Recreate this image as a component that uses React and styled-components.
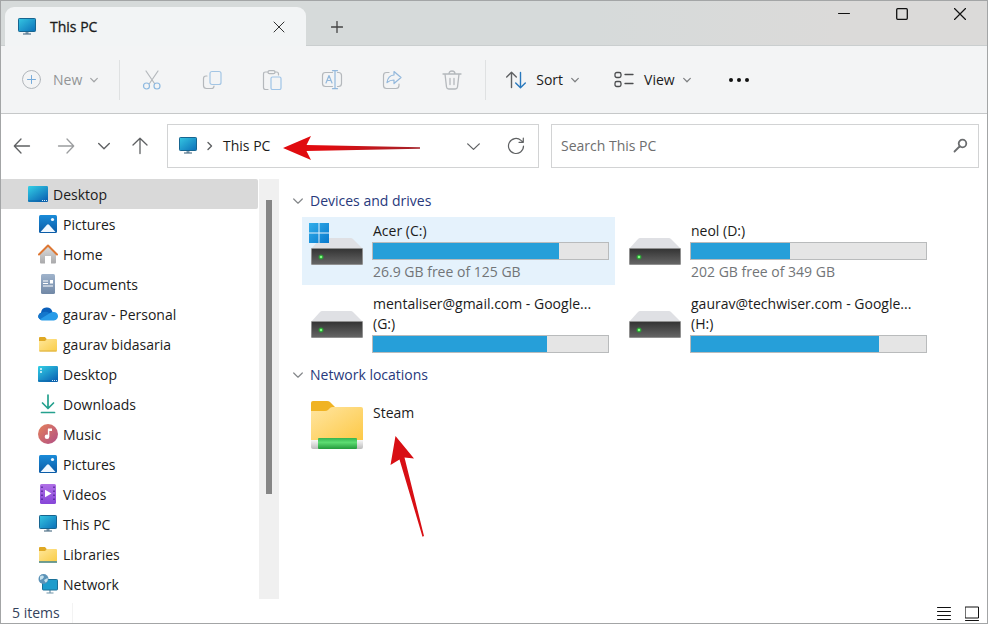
import React from 'react';
import styled, { createGlobalStyle } from 'styled-components';

const GlobalStyle = createGlobalStyle`
  * {
    box-sizing: border-box;
  }
  body {
    margin: 0;
    background: #fff;
    color: #1b1b1b;
    font-family: "Open Sans", "Noto Sans", sans-serif;
    font-size: 14px;
    line-height: 20px;
  }
  button, input {
    font: inherit;
    color: inherit;
    padding: 0;
    border: 0;
    background: none;
  }
  svg {
    display: block;
    flex: none;
  }
`;

const Window = styled.div`
  display: flex;
  flex-direction: column;
  min-height: 100vh;
  border: 1px solid #a3a5a6;
  background: #fff;
`;

const TitleBar = styled.header`
  display: flex;
  height: 45px;
  padding-left: 4px;
  background: linear-gradient(90deg, #d6dada 60%, #dbdad9 85%);
  border-bottom: 1px solid #cacecf;
`;

const Tab = styled.div`
  display: flex;
  align-items: center;
  width: 301px;
  height: 39px;
  margin-top: 6px;
  padding: 0 18px 0 12px;
  gap: 13px;
  border-radius: 9px 9px 0 0;
  background: #f2f4f5;
`;

const TabTitle = styled.span`
  flex: 1;
  -webkit-text-stroke: 0.3px #1b1b1b;
`;

const IconButton = styled.button`
  display: flex;
  align-items: center;
  justify-content: center;
  width: ${({ $width }) => $width || 18}px;
  height: ${({ $height }) => $height || 18}px;
`;

const WindowControls = styled.div`
  display: flex;
  gap: 40px;
  margin-left: auto;
  padding: 4px 18px 0 0;
`;

const Toolbar = styled.div`
  display: flex;
  align-items: center;
  height: 68px;
  padding-left: 20px;
  background: #f3f4f5;
  border-bottom: 1px solid #c6c8c9;
`;

const ToolButton = styled.button`
  display: flex;
  align-items: center;
  gap: 10px;
  height: 40px;
  margin-right: ${({ $after }) => $after}px;
  color: ${({ disabled }) => (disabled ? '#929496' : '#1b1b1b')};

  svg:last-child {
    margin-left: -2px;
  }
`;

const FileTools = styled.div`
  display: flex;
  padding: 0 3px 0 2px;
  border: solid #dfe1e2;
  border-width: 0 1px;
  margin-right: 20px;
`;

const NavRow = styled.div`
  display: flex;
  align-items: center;
  padding: 10px 8px 11px 0;
`;

const NavButtons = styled.div`
  display: flex;
  margin-right: 6px;
`;

const AddressBar = styled.div`
  flex: 93 1 372px;
  display: flex;
  align-items: center;
  height: 44px;
  min-width: 0;
  padding: 0 13px 0 10px;
  border: 1px solid #d2d3d4;
`;

const Crumb = styled.a`
  margin: 0 13px 0 1px;
  color: inherit;
  text-decoration: none;
  white-space: nowrap;
`;

const AddressActions = styled.div`
  display: flex;
  gap: 25px;
  margin-left: auto;
`;

const SearchBox = styled.form`
  flex: 107 1 428px;
  display: flex;
  align-items: center;
  height: 44px;
  min-width: 0;
  margin-left: 12px;
  padding: 0 9px;
  border: 1px solid #d2d3d4;

  input {
    flex: 1;
    min-width: 0;
    outline: none;
  }
  input::placeholder {
    color: #6e6e6e;
    opacity: 1;
  }
`;

const Body = styled.div`
  display: flex;
  flex: 1;
`;

const Sidebar = styled.nav`
  flex: none;
  width: 257px;
`;

const TreeList = styled.ul`
  margin: 0;
  padding: 0;
  list-style: none;
`;

const TreeLink = styled.a`
  display: flex;
  align-items: center;
  gap: 5px;
  height: 30px;
  padding-left: ${({ $root }) => ($root ? 27 : 37)}px;
  border-radius: 0 2px 2px 0;
  background: ${({ $root }) => ($root ? '#d9d9d9' : 'transparent')};
  color: #1b1b1b;
  text-decoration: none;
`;

const TreeLabel = styled.span`
  padding-top: 2px;
`;

const ScrollTrack = styled.div`
  flex: none;
  width: 20px;
  margin-left: 1px;
  padding: 21px 7px 0;
  background: #f0f0f0;
`;

const ScrollThumb = styled.div`
  height: 294px;
  background: #868686;
`;

const Content = styled.main`
  flex: 1;
  padding: 12px 12px 0 14px;
`;

const Group = styled.section`
  margin-bottom: 7px;
`;

const GroupTitle = styled.h2`
  display: flex;
  align-items: center;
  gap: 7px;
  margin: 0 0 6px;
  font-size: 14px;
  font-weight: 400;
  color: #28397c;
`;

const Tiles = styled.div`
  display: grid;
  grid-template-columns: repeat(auto-fill, 313px);
  gap: 5px;
  padding-left: 9px;
`;

const Tile = styled.article`
  position: relative;
  display: flex;
  align-items: center;
  gap: 7px;
  height: 68px;
  padding: 0 6px 0 5px;
  background: ${({ $active }) => ($active ? '#e5f2fc' : 'transparent')};
`;

const TileText = styled.div`
  align-self: flex-start;
  flex: 1;
  min-width: 0;
  padding-top: ${({ $top }) => $top || 4}px;
`;

const TileLine = styled.div`
  padding-left: 1px;
  white-space: nowrap;
  color: ${({ $muted }) => ($muted ? '#727578' : '#1b1b1b')};
`;

const Meter = styled.div`
  height: 18px;
  margin: 1px 0 2px;
  border: 1px solid #b9bbbc;
  background: #e5e5e5;
`;

const MeterFill = styled.div`
  height: 100%;
  background: #269fd9;
`;

const PointerArrow = styled.svg`
  position: absolute;
  left: 86px;
  top: 44px;
`;

const StatusBar = styled.footer`
  display: flex;
  align-items: center;
  gap: 14px;
  height: 24px;
  padding: 4px 8px 0 11px;
  color: #34425c;
`;

const ItemCount = styled.span`
  padding-right: 12px;
  border-right: 1px solid #f3f3f3;
  margin-right: auto;
`;

const Line = ({ w = 20, h = 20, color = '#5f6163', width = 1, children }) => (
  <svg width={w} height={h} viewBox={`0 0 ${w} ${h}`} fill="none" stroke={color} strokeWidth={width}
    strokeLinecap="round" strokeLinejoin="round" aria-hidden="true">
    {children}
  </svg>
);

const Chevron = ({ size = 8, color, width = 1.2 }) => (
  <Line w={size} h={size} color={color} width={width}>
    <path d={`M.7 ${size * 0.3}L${size / 2} ${size * 0.72}L${size - 0.7} ${size * 0.3}`} />
  </Line>
);

const MonitorIcon = () => (
  <svg width="20" height="20" viewBox="0 0 20 20" aria-hidden="true">
    <defs>
      <linearGradient id="monitor" x1="0" y1="0" x2="1" y2="1">
        <stop offset="0" stopColor="#35c6e2" />
        <stop offset="1" stopColor="#0b6fb8" />
      </linearGradient>
    </defs>
    <path d="M8.5 14h3v3h-3z" fill="#7d99ad" />
    <rect x="1.5" y="1.5" width="17" height="13" rx=".8" fill="url(#monitor)" stroke="#176590" />
    <path d="M6 17h8" stroke="#56758b" strokeWidth="1.2" />
  </svg>
);

const DesktopIcon = ({ dots }) => (
  <svg width="20" height="20" viewBox="0 0 20 20" aria-hidden="true">
    <defs>
      <linearGradient id="desktop" x1="0" y1="0" x2=".8" y2="1">
        <stop offset="0" stopColor="#33d0e6" />
        <stop offset="1" stopColor="#0a63b4" />
      </linearGradient>
    </defs>
    <rect y="2" width="20" height="16" rx="1.2" fill="url(#desktop)" />
    <path d="M0 16h20v.8a1.2 1.2 0 0 1-1.2 1.2H1.2A1.2 1.2 0 0 1 0 16.8z" fill="#0b5c9f" opacity=".4" />
    <path d="M14 16.5h1m1 0h1m1 0h1" stroke="#d8efff" />
    {dots && <path d="M2 5h2M2 8h2" stroke="#e9fbff" strokeWidth="1.6" />}
  </svg>
);

const PicturesIcon = () => (
  <svg width="20" height="20" viewBox="0 0 20 20" aria-hidden="true">
    <defs>
      <linearGradient id="pictures" x1="0" y1="0" x2="0" y2="1">
        <stop offset="0" stopColor="#1a8bd8" />
        <stop offset="1" stopColor="#0b5ba6" />
      </linearGradient>
    </defs>
    <rect x="1" y="1" width="18" height="18" rx="1.5" fill="url(#pictures)" />
    <path d="M2.5 18L9 10.8q1-1 2 0L17.5 18z" fill="#f1f8ff" />
    <circle cx="14.5" cy="5.5" r="1.6" fill="#f1f8ff" />
  </svg>
);

const HomeIcon = () => (
  <svg width="20" height="20" viewBox="0 0 20 20" aria-hidden="true">
    <defs>
      <linearGradient id="homeWall" x1="0" y1="0" x2="0" y2="1">
        <stop offset="0" stopColor="#dedede" />
        <stop offset="1" stopColor="#a9a9ab" />
      </linearGradient>
    </defs>
    <path d="M2 10l8-8 8 8v8.5q0 1-1 1h-4V12H7v7.5H3q-1 0-1-1z" fill="url(#homeWall)" />
    <path d="M1 10.5L10 1.5l9 9" fill="none" stroke="#dd7733" strokeWidth="2" strokeLinecap="round" strokeLinejoin="round" />
  </svg>
);

const DocumentsIcon = () => (
  <svg width="20" height="20" viewBox="0 0 20 20" aria-hidden="true">
    <defs>
      <linearGradient id="documents" x1="0" y1="0" x2="0" y2="1">
        <stop offset="0" stopColor="#9fb3cb" />
        <stop offset="1" stopColor="#7188a6" />
      </linearGradient>
    </defs>
    <rect x="3" y="0" width="14" height="20" rx="1.5" fill="url(#documents)" />
    <path d="M5 7h5M5 9.5h5M5 12h10" stroke="#fff" strokeWidth="1.2" />
    <rect x="12" y="6" width="3" height="3.5" fill="#fff" />
  </svg>
);

const CloudIcon = () => (
  <svg width="20" height="20" viewBox="0 0 20 20" aria-hidden="true">
    <path d="M3.5 16A3.7 3.7 0 0 1 3 8.8 5.8 5.8 0 0 1 14.3 7.5L15 10z" fill="#0b60ba" />
    <path d="M6 8q3-1 5 1l6 4-1 3H4q-3-.5-4-3 .5-4 6-5z" fill="#1477cc" />
    <path d="M2 15.2L12.5 8.8a5 5 0 0 1 3-.8A4.1 4.1 0 0 1 16 16.5H4q-1.2 0-2-1.3z" fill="#289be8" />
  </svg>
);

const FolderIcon = ({ library }) => (
  <svg width="20" height="20" viewBox="0 0 20 20" aria-hidden="true">
    <defs>
      <linearGradient id="folder" x1="0" y1="0" x2="1" y2="1">
        <stop offset="0" stopColor="#ffe79a" />
        <stop offset="1" stopColor="#f9cc47" />
      </linearGradient>
    </defs>
    <path d="M1 4q0-1 1-1h5l2 2.5L7 8H1z" fill="#dfa824" />
    <path d="M1 7h6l2-2h9q1 0 1 1v10.500q0 1-1 1H2q-1 0-1-1z" fill="url(#folder)" />
    <path d={library ? 'M1 18h18' : 'M1.5 17h17'} stroke={library ? '#417f79' : '#dcb040'} strokeWidth={library ? 1.5 : 1} />
  </svg>
);

const DownloadsIcon = () => (
  <Line color="#25a18e" width={1.7}>
    <path d="M10 1v13M4.5 9l5.5 5.5L15.5 9" />
    <path d="M3.5 18.5h13" />
  </Line>
);

const MusicIcon = () => (
  <svg width="20" height="20" viewBox="0 0 20 20" aria-hidden="true">
    <defs>
      <linearGradient id="music" x1="0" y1="0" x2="1" y2="1">
        <stop offset="0" stopColor="#e5815a" />
        <stop offset="1" stopColor="#b04e86" />
      </linearGradient>
    </defs>
    <circle cx="10" cy="10" r="10" fill="url(#music)" />
    <path d="M10.6 5v7.5" stroke="#fff" strokeWidth="1.5" />
    <path d="M10 4.5h4V7h-4z" fill="#fff" />
    <circle cx="9" cy="12.8" r="2.3" fill="#fff" />
  </svg>
);

const VideosIcon = () => (
  <svg width="20" height="20" viewBox="0 0 20 20" aria-hidden="true">
    <defs>
      <linearGradient id="videos" x1="0" y1="0" x2="0" y2="1">
        <stop offset="0" stopColor="#b070e6" />
        <stop offset="1" stopColor="#8646d8" />
      </linearGradient>
    </defs>
    <rect x="2" y="0" width="16" height="20" rx="1.5" fill="url(#videos)" />
    <path d="M4 2.5v16M16 2.5v16" stroke="#4c2391" strokeWidth="1.4" strokeDasharray="1.6 2.4" />
    <path d="M7 5.8v7.4L13.5 9.5z" fill="#fff" />
  </svg>
);

const NetworkIcon = () => (
  <svg width="20" height="20" viewBox="0 0 20 20" aria-hidden="true">
    <path d="M12 16v2.5M8.5 19h7" stroke="#6f93a8" strokeWidth="1.2" />
    <rect x="4.5" y="5.5" width="15" height="10.5" rx=".8" fill="#1d9ccc" stroke="#1a7098" />
    <circle cx="5.5" cy="5" r="5" fill="#5c93b8" />
    <path d="M2 2.5q3-2 4 .5L4.5 5 2 6zM6 6l3.5-2q1 3-2 4.5z" fill="#c6e2ee" />
  </svg>
);

const DriveIcon = ({ system }) => (
  <svg width="58" height="58" viewBox="0 0 58 58" aria-hidden="true">
    <defs>
      <linearGradient id="driveFront" x1="0" y1="0" x2="0" y2="1">
        <stop offset="0" stopColor="#333" />
        <stop offset="1" stopColor="#666" />
      </linearGradient>
      <linearGradient id="winLogo" x1="0" y1="0" x2="1" y2="1">
        <stop offset="0" stopColor="#32aeea" />
        <stop offset="1" stopColor="#0879cd" />
      </linearGradient>
    </defs>
    <path d="M15 16h29q1 0 2 1l10 10H4L13 17q1-1 2-1z" fill="#dfe0e4" />
    <rect x="4.5" y="26.5" width="51" height="16" rx=".5" fill="url(#driveFront)" stroke="#909090" />
    <circle cx="14" cy="35" r="2.5" fill="#2d9a36" />
    <circle cx="14" cy="35" r="1.3" fill="#7dff7f" />
    {system && <path d="M2 1h9.5v9.5H2zM12.5 1H22v9.5h-9.5zM2 11.5h9.5V21H2zM12.5 11.5H22V21h-9.5z" fill="url(#winLogo)" />}
  </svg>
);

const NetworkFolderIcon = () => (
  <svg width="58" height="58" viewBox="0 0 58 58" aria-hidden="true">
    <defs>
      <linearGradient id="netFolder" x1="0" y1="0" x2="1" y2="1">
        <stop offset="0" stopColor="#ffe5a0" />
        <stop offset="1" stopColor="#fdc947" />
      </linearGradient>
      <linearGradient id="pipe" x1="0" y1="0" x2="0" y2="1">
        <stop offset="0" stopColor="#35b350" />
        <stop offset=".4" stopColor="#5ddc72" />
        <stop offset="1" stopColor="#249a3c" />
      </linearGradient>
      <linearGradient id="pipeEnd" x1="0" y1="0" x2="0" y2="1">
        <stop offset="0" stopColor="#f7f7f7" />
        <stop offset="1" stopColor="#bcbcbc" />
      </linearGradient>
    </defs>
    <path d="M4 7q0-2 2-2h14q2 0 3 1l5 5-9 8H4z" fill="#f0b323" />
    <path d="M4 15h14q2 0 3-1l2-2q1-1 3-1h28q2 0 2 2v31H4z" fill="url(#netFolder)" />
    <path d="M4 44h52v7q0 2-2 2H6q-2 0-2-2z" fill="url(#pipeEnd)" />
    <rect x="11" y="42" width="39" height="11" rx="1" fill="url(#pipe)" />
  </svg>
);

const NewIcon = () => (
  <Line w={22} color="#b1b6bb">
    <circle cx="10.5" cy="9.5" r="9" />
    <path d="M10.5 5.5v8M6.5 9.5h8" stroke="#78acdb" />
  </Line>
);

const CutIcon = () => (
  <Line color="#b4b8bc" width={1.2}>
    <path d="M4 1l8.5 12.5M16 1L7.5 13.5" />
    <circle cx="4.5" cy="16" r="3" stroke="#8db9e0" />
    <circle cx="15" cy="16" r="3" stroke="#8db9e0" />
  </Line>
);

const CopyIcon = () => (
  <Line color="#b4b8bc" width={1.2}>
    <path d="M5 6H4Q1.5 6 1.5 8.500v7Q1.5 18.5 4.5 18.5h5Q12 18.5 12 16" />
    <rect x="8" y="1.5" width="11" height="13" rx="2" stroke="#a3c5e4" />
  </Line>
);

const PasteIcon = () => (
  <Line color="#b4b8bc" width={1.2}>
    <path d="M6 19.5H3.5q-2 0-2-2V4q0-2 2-2H6M13 2h1.5q2 0 2 2v1" />
    <rect x="6" y=".7" width="7" height="3" rx="1.5" />
    <rect x="9" y="7" width="10" height="12.5" rx="1.5" stroke="#9fc4e7" />
  </Line>
);

const RenameIcon = () => (
  <Line w={22} color="#b4b8bc" width={1.2}>
    <path d="M11.5 2.5h-7q-3 0-3 3v8q0 3 3 3h7M16.5 2.5h1q3 0 3 3v8q0 3-3 3h-1" />
    <path d="M14 .7v18M11.5.7h5M11.5 18.7h5M5 13l3-7.5L11 13M6 10.5h4" stroke="#93b8dc" />
  </Line>
);

const ShareIcon = () => (
  <Line color="#b4b8bc" width={1.2}>
    <path d="M7 2.5H4.5q-3 0-3 3v10q0 3 3 3H14q3 0 3-3V14" />
    <path d="M12 1.5l7 6-7 6V10q-4 0-7 2.5Q6 5.500 12 5z" stroke="#93b8dc" />
  </Line>
);

const DeleteIcon = () => (
  <Line color="#b4b8bc" width={1.3}>
    <path d="M1 4h18M7 4q0-3 3-3t3 3M3 4l1.5 13q.3 2 2.300 2h6.400q2 0 2.300-2L17 4M8 8.5v6M12 8.5v6" />
  </Line>
);

const SortIcon = () => (
  <Line width={1.4}>
    <path d="M5.5 17.5v-15M.7 7l4.800-4.800L10.300 7" />
    <path d="M14.5 2.5v15M9.7 13l4.800 4.800L19.300 13" stroke="#2878bd" />
  </Line>
);

const ViewIcon = () => (
  <Line color="#4b4d4f" width={1.3}>
    <rect x="1" y="2.5" width="6" height="5" rx="1.8" />
    <rect x="1" y="11.5" width="6" height="5" rx="1.8" />
    <path d="M11 4.5h8M11 13.5h8" />
  </Line>
);

const tree = [
  { name: 'Desktop', icon: <DesktopIcon />, root: true },
  { name: 'Pictures', icon: <PicturesIcon /> },
  { name: 'Home', icon: <HomeIcon /> },
  { name: 'Documents', icon: <DocumentsIcon /> },
  { name: 'gaurav - Personal', icon: <CloudIcon /> },
  { name: 'gaurav bidasaria', icon: <FolderIcon /> },
  { name: 'Desktop', icon: <DesktopIcon dots /> },
  { name: 'Downloads', icon: <DownloadsIcon /> },
  { name: 'Music', icon: <MusicIcon /> },
  { name: 'Pictures', icon: <PicturesIcon /> },
  { name: 'Videos', icon: <VideosIcon /> },
  { name: 'This PC', icon: <MonitorIcon /> },
  { name: 'Libraries', icon: <FolderIcon library /> },
  { name: 'Network', icon: <NetworkIcon /> },
];

const drives = [
  { lines: ['Acer (C:)'], used: 79, free: '26.9 GB free of 125 GB', system: true },
  { lines: ['neol (D:)'], used: 42, free: '202 GB free of 349 GB' },
  { lines: ['mentaliser@gmail.com - Google...', '(G:)'], used: 74 },
  { lines: ['gaurav@techwiser.com - Google...', '(H:)'], used: 80 },
];

const fileTools = [
  { label: 'Cut', icon: <CutIcon /> },
  { label: 'Copy', icon: <CopyIcon /> },
  { label: 'Paste', icon: <PasteIcon /> },
  { label: 'Rename', icon: <RenameIcon /> },
  { label: 'Share', icon: <ShareIcon /> },
  { label: 'Delete', icon: <DeleteIcon /> },
];

const GroupHeading = ({ children }) => (
  <GroupTitle>
    <Chevron size={10} color="#85888b" />
    {children}
  </GroupTitle>
);

export default function App() {
  return (
    <>
      <GlobalStyle />
      <Window>
        <TitleBar>
          <Tab>
            <MonitorIcon />
            <TabTitle>This PC</TabTitle>
            <IconButton type="button" aria-label="Close tab">
              <Line w={12} h={12} color="#333"><path d="M1 1l10 10M11 1L1 11" /></Line>
            </IconButton>
          </Tab>
          <IconButton type="button" aria-label="New tab" $width={62} $height={52}>
            <Line w={12} h={12} color="#444" width={1.3}><path d="M6 .5v11M.5 6h11" /></Line>
          </IconButton>
          <WindowControls>
            <IconButton type="button" aria-label="Minimize">
              <Line w={12} h={12} color="#111"><path d="M.5 5.5h11" /></Line>
            </IconButton>
            <IconButton type="button" aria-label="Maximize">
              <Line w={12} h={12} color="#111" width={1.3}><rect x=".7" y=".7" width="10.6" height="10.6" rx="1" /></Line>
            </IconButton>
            <IconButton type="button" aria-label="Close">
              <Line w={12} h={12} color="#111" width={1.2}><path d="M.5.5l11 11M11.5.5l-11 11" /></Line>
            </IconButton>
          </WindowControls>
        </TitleBar>

        <Toolbar>
          <ToolButton type="button" disabled $after={21}>
            <NewIcon />
            New
            <Chevron color="#a3a5a7" />
          </ToolButton>
          <FileTools>
            {fileTools.map((tool) => (
              <IconButton key={tool.label} type="button" disabled aria-label={tool.label} $width={60} $height={40}>
                {tool.icon}
              </IconButton>
            ))}
          </FileTools>
          <ToolButton type="button" $after={35}>
            <SortIcon />
            Sort
            <Chevron color="#7d7f81" />
          </ToolButton>
          <ToolButton type="button" $after={28}>
            <ViewIcon />
            View
            <Chevron color="#7d7f81" />
          </ToolButton>
          <IconButton type="button" aria-label="See more" $width={40} $height={40}>
            <svg width="22" height="6" viewBox="0 0 22 6" fill="#111" aria-hidden="true">
              <circle cx="3" cy="3" r="2" />
              <circle cx="11" cy="3" r="2" />
              <circle cx="19" cy="3" r="2" />
            </svg>
          </IconButton>
        </Toolbar>

        <NavRow>
          <NavButtons>
            <IconButton type="button" aria-label="Back" $width={42}>
              <Line w={18} h={18} width={1.3}><path d="M16.5 9h-15M8 2L1.3 9 8 16" /></Line>
            </IconButton>
            <IconButton type="button" aria-label="Forward" $width={46}>
              <Line w={18} h={18} color="#9b9d9f" width={1.3}><path d="M1.5 9h15M10 2l6.7 7-6.7 7" /></Line>
            </IconButton>
            <IconButton type="button" aria-label="Recent locations" $width={30}>
              <Chevron size={12} color="#5f6163" width={1.4} />
            </IconButton>
            <IconButton type="button" aria-label="Up" $width={42}>
              <Line w={18} h={18} width={1.3}><path d="M9 16.5v-15M2 8l7-6.7L16 8" /></Line>
            </IconButton>
          </NavButtons>
          <AddressBar>
            <MonitorIcon />
            <Line w={24} h={10} width={1.4}><path d="M10 1.5L13.5 5 10 8.5" /></Line>
            <Crumb href="#">This PC</Crumb>
            <svg width="138" height="28" viewBox="0 0 138 28" aria-hidden="true">
              <defs>
                <linearGradient id="arrowLeft" x1="0" y1="0" x2="1" y2="0">
                  <stop offset=".3" stopColor="#e00b0f" />
                  <stop offset="1" stopColor="#a3232a" />
                </linearGradient>
              </defs>
              <path d="M0 16L28 4l-4.5 9L137 15.3v1.4L23.5 19 28 28z" fill="url(#arrowLeft)" />
            </svg>
            <AddressActions>
              <IconButton type="button" aria-label="Previous locations">
                <Chevron size={13} color="#5f6163" width={1.3} />
              </IconButton>
              <IconButton type="button" aria-label="Refresh">
                <Line w={18} h={18} width={1.2}>
                  <path d="M16.5 9a7.5 7.5 0 1 1-2.5-5.600L16 5M16.3 1v4.300H12" />
                </Line>
              </IconButton>
            </AddressActions>
          </AddressBar>
          <SearchBox role="search">
            <input type="text" placeholder="Search This PC" aria-label="Search This PC" />
            <IconButton type="button" aria-label="Search">
              <Line w={16} h={16} color="#6b6d6f" width={1.8}>
                <circle cx="10.5" cy="5.5" r="3.8" />
                <path d="M7.5 8.5l-5 5" />
              </Line>
            </IconButton>
          </SearchBox>
        </NavRow>

        <Body>
          <Sidebar aria-label="Folders">
            <TreeList>
              {tree.map((item, i) => (
                <li key={i}>
                  <TreeLink href="#" $root={item.root}>
                    {item.icon}
                    <TreeLabel>{item.name}</TreeLabel>
                  </TreeLink>
                </li>
              ))}
            </TreeList>
          </Sidebar>
          <ScrollTrack>
            <ScrollThumb />
          </ScrollTrack>

          <Content>
            <Group>
              <GroupHeading>Devices and drives</GroupHeading>
              <Tiles>
                {drives.map((drive) => (
                  <Tile key={drive.lines.join()} $active={drive.system}>
                    <DriveIcon system={drive.system} />
                    <TileText>
                      {drive.lines.map((line) => <TileLine key={line}>{line}</TileLine>)}
                      <Meter>
                        <MeterFill style={{ width: `${drive.used}%` }} />
                      </Meter>
                      {drive.free && <TileLine $muted>{drive.free}</TileLine>}
                    </TileText>
                  </Tile>
                ))}
              </Tiles>
            </Group>
            <Group>
              <GroupHeading>Network locations</GroupHeading>
              <Tiles>
                <Tile>
                  <NetworkFolderIcon />
                  <TileText $top={12}>
                    <TileLine>Steam</TileLine>
                  </TileText>
                  <PointerArrow width="38" height="104" viewBox="0 0 38 104" aria-hidden="true">
                    <path d="M7.5 1L26 23.5l-9.5-1L36 101l-1.5.7-23-77.2-9 5.500z" fill="#d80f14" />
                  </PointerArrow>
                </Tile>
              </Tiles>
            </Group>
          </Content>
        </Body>

        <StatusBar>
          <ItemCount>5 items</ItemCount>
          <IconButton type="button" aria-label="Details view" $width={14}>
            <Line w={14} h={14} color="#111"><path d="M.5 1.5h13M.5 5.5h13M.5 9.5h13M.5 13.5h13" /></Line>
          </IconButton>
          <IconButton type="button" aria-label="Large icons view" $width={14}>
            <Line w={14} h={15} color="#111"><rect x=".5" y="1" width="13" height="11" /><path d="M.5 14.5h13" /></Line>
          </IconButton>
        </StatusBar>
      </Window>
    </>
  );
}
